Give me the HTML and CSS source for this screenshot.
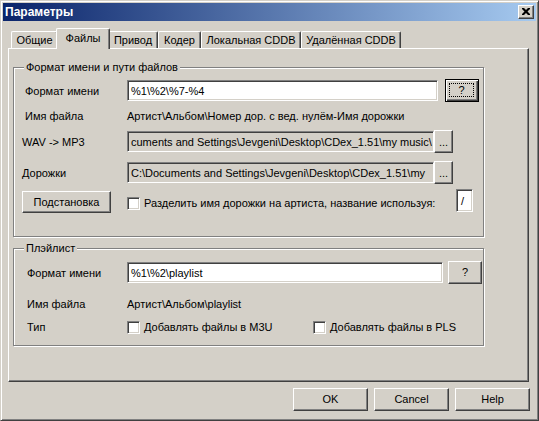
FILE: index.html
```html
<!DOCTYPE html>
<html lang="ru">
<head>
<meta charset="utf-8">
<title>Параметры</title>
<link rel="stylesheet" href="styles.css">
</head>
<body>
<div class="window">
  <div class="titlebar">
    <span class="title">Параметры</span>
    <div class="close">
      <svg width="8" height="7" viewBox="0 0 8 7"><path d="M0 0h2l2 2 2-2h2v1l-2.5 2.5L8 6v1H6L4 5 2 7H0V6l2.5-2.5L0 1z" fill="#000"/></svg>
    </div>
  </div>
  <div class="content">
    <div class="tabs">
      <div class="tab t-general">Общие</div>
      <div class="tab tab-sel t-files">Файлы</div>
      <div class="tab t-drive">Привод</div>
      <div class="tab t-coder">Кодер</div>
      <div class="tab t-local">Локальная CDDB</div>
      <div class="tab t-remote">Удалённая CDDB</div>
    </div>
    <div class="panel">
      <fieldset class="group g1">
        <legend>Формат имени и пути файлов</legend>
        <div class="row r1">
          <span class="lbl">Формат имени</span>
          <div class="edit e-fmt">%1\%2\%7-%4</div>
          <div class="btn btn-def b-q1"><span class="focus">?</span></div>
        </div>
        <div class="row r2">
          <span class="lbl">Имя файла</span>
          <span class="val">Артист\Альбом\Номер дор. с вед. нулём-Имя дорожки</span>
        </div>
        <div class="row r3 row-wide">
          <span class="lbl lbl-wide">WAV -&gt; MP3</span>
          <div class="edit edit-ro e-path">cuments and Settings\Jevgeni\Desktop\CDex_1.51\my music\</div>
          <div class="btn b-dots">...</div>
        </div>
        <div class="row r4 row-wide">
          <span class="lbl lbl-wide">Дорожки</span>
          <div class="edit edit-ro e-path">C:\Documents and Settings\Jevgeni\Desktop\CDex_1.51\my</div>
          <div class="btn b-dots">...</div>
        </div>
        <div class="row r5 row-wide">
          <div class="btn b-subst">Подстановка</div>
          <div class="check-item c-split"><span class="check"></span><span>Разделить имя дорожки на артиста, название используя:</span></div>
          <div class="edit e-sep">/</div>
        </div>
      </fieldset>
      <fieldset class="group g2">
        <legend>Плэйлист</legend>
        <div class="row p1">
          <span class="lbl">Формат имени</span>
          <div class="edit e-pl">%1\%2\playlist</div>
          <div class="btn b-q2">?</div>
        </div>
        <div class="row p2">
          <span class="lbl">Имя файла</span>
          <span class="val">Артист\Альбом\playlist</span>
        </div>
        <div class="row p3">
          <span class="lbl">Тип</span>
          <div class="check-item c-m3u"><span class="check"></span><span>Добавлять файлы в M3U</span></div>
          <div class="check-item"><span class="check"></span><span>Добавлять файлы в PLS</span></div>
        </div>
      </fieldset>
    </div>
    <div class="buttons">
      <div class="btn b-dlg">OK</div>
      <div class="btn b-dlg">Cancel</div>
      <div class="btn b-dlg">Help</div>
    </div>
  </div>
</div>
</body>
</html>
```

FILE: styles.css
```css
* { box-sizing: border-box; }
html, body { margin: 0; padding: 0; background: #d4d0c8; }
body {
  font-family: "Liberation Sans", Arial, sans-serif;
  font-size: 11px;
  color: #000;
}
.window {
  width: 539px;
  height: 421px;
  background: #d4d0c8;
  border: 1px solid;
  border-color: #d4d0c8 #404040 #404040 #d4d0c8;
  box-shadow: inset 1px 1px 0 #fff, inset -1px -1px 0 #808080;
  padding: 2px;
  overflow: hidden;
}
.titlebar {
  height: 18px;
  background: linear-gradient(to right, #0a246a, #a6caf0);
  display: flex;
  align-items: center;
  justify-content: space-between;
  padding: 0 2px 0 2px;
}
.title {
  color: #fff;
  font-weight: bold;
  font-size: 12px;
}
.close {
  width: 16px;
  height: 14px;
  background: #d4d0c8;
  border: 1px solid;
  border-color: #fff #404040 #404040 #fff;
  box-shadow: inset -1px -1px 0 #808080;
  display: flex;
  align-items: center;
  justify-content: center;
  padding: 0 1px 1px 0;
}
.close svg { display: block; }
.content {
  padding: 7px 5px 0 5px;
}
.tabs {
  height: 20px;
  display: flex;
  align-items: flex-end;
  padding-left: 3px;
}
.tab {
  height: 17px;
  border-top: 1px solid #fff;
  border-left: 1px solid #fff;
  border-right: 1px solid #404040;
  box-shadow: inset -1px 0 0 #808080;
  border-radius: 2px 2px 0 0;
  display: flex;
  align-items: center;
  justify-content: center;
  padding-bottom: 1px;
  white-space: nowrap;
  background: #d4d0c8;
}
.tab-sel {
  position: relative;
  z-index: 1;
  height: 21px;
  margin: 0 -2px -1px -2px;
  padding-bottom: 3px;
}
.t-general { width: 47px; }
.t-files { width: 54px; }
.t-drive { width: 50px; }
.t-coder { width: 43px; }
.t-local { width: 100px; }
.t-remote { width: 100px; }

.panel {
  width: 521px;
  height: 334px;
  border: 1px solid;
  border-color: #fff #404040 #404040 #fff;
  box-shadow: inset -1px -1px 0 #808080;
  padding: 12px 0 0 4px;
}
.group {
  margin: 0;
  width: 471px;
  padding: 0;
  border: 1px solid #808080;
  box-shadow: inset 1px 1px 0 #fff, 1px 1px 0 #fff;
  min-inline-size: 0;
}
.group legend {
  margin-left: 10px;
  padding: 0 2px;
  line-height: 13px;
  background: #d4d0c8;
}
.g1 { padding-bottom: 22px; }
.g2 { margin-top: 5px; padding-bottom: 10px; }

.row {
  display: flex;
  align-items: center;
  padding-left: 11px;
}
.row-wide { padding-left: 8px; padding-right: 10px; }
.lbl { width: 102px; flex: none; white-space: nowrap; }
.lbl-wide { width: 105px; }
.val { white-space: nowrap; }

.r1 { margin-top: 5px; height: 23px; }
.r2 { margin-top: 6px; height: 16px; }
.r3 { margin-top: 6px; height: 23px; }
.r4 { margin-top: 8px; height: 23px; }
.r5 { margin-top: 5px; height: 25px; }

.g2 .row { padding-left: 13px; }
.g2 .lbl { width: 100px; }
.p1 { margin-top: 6px; height: 23px; }
.p2 { margin-top: 12px; height: 16px; }
.p3 { margin-top: 7px; height: 16px; }

.edit {
  height: 21px;
  background: #fff;
  border: 1px solid;
  border-color: #808080 #fff #fff #808080;
  box-shadow: inset 1px 1px 0 #404040, inset -1px -1px 0 #d4d0c8;
  padding: 0 3px;
  display: flex;
  align-items: center;
  white-space: nowrap;
  overflow: hidden;
  flex: none;
}
.edit-ro { background: #d4d0c8; }
.e-fmt { width: 311px; }
.e-path { width: 307px; }
.e-pl { width: 316px; }
.e-sep { width: 17px; height: 23px; margin-left: auto; align-self: flex-start; padding: 0 4px; }

.btn {
  background: #d4d0c8;
  border: 1px solid;
  border-color: #fff #404040 #404040 #fff;
  box-shadow: inset -1px -1px 0 #808080;
  display: flex;
  align-items: center;
  justify-content: center;
  white-space: nowrap;
  flex: none;
  padding-bottom: 1px;
}
.btn-def {
  border: 1px solid #000;
  box-shadow: inset 1px 1px 0 #fff, inset -1px -1px 0 #404040, inset -2px -2px 0 #808080;
  padding: 3px 4px 4px 3px;
}
.focus {
  flex: 1;
  align-self: stretch;
  display: flex;
  align-items: center;
  justify-content: center;
  border: 1px dotted #000;
}
.b-q1 { width: 34px; height: 23px; margin-left: 7px; }
.b-q2 { width: 34px; height: 23px; margin-left: 5px; }
.b-dots { width: 19px; height: 23px; align-items: flex-end; padding-bottom: 4px; }
.b-subst { width: 89px; height: 22px; align-self: flex-end; margin-bottom: 1px; }

.check-item {
  display: flex;
  align-items: center;
  white-space: nowrap;
}
.check {
  width: 13px;
  height: 13px;
  flex: none;
  background: #fff;
  border: 1px solid;
  border-color: #808080 #fff #fff #808080;
  box-shadow: inset 1px 1px 0 #404040, inset -1px -1px 0 #d4d0c8;
  margin-right: 4px;
}
.c-split { margin-left: 16px; margin-top: 3px; }
.c-m3u { width: 186px; }

.buttons {
  display: flex;
  justify-content: flex-end;
  gap: 6px;
  margin-top: 6px;
  padding-right: 1px;
}
.b-dlg { width: 75px; height: 23px; }
```
